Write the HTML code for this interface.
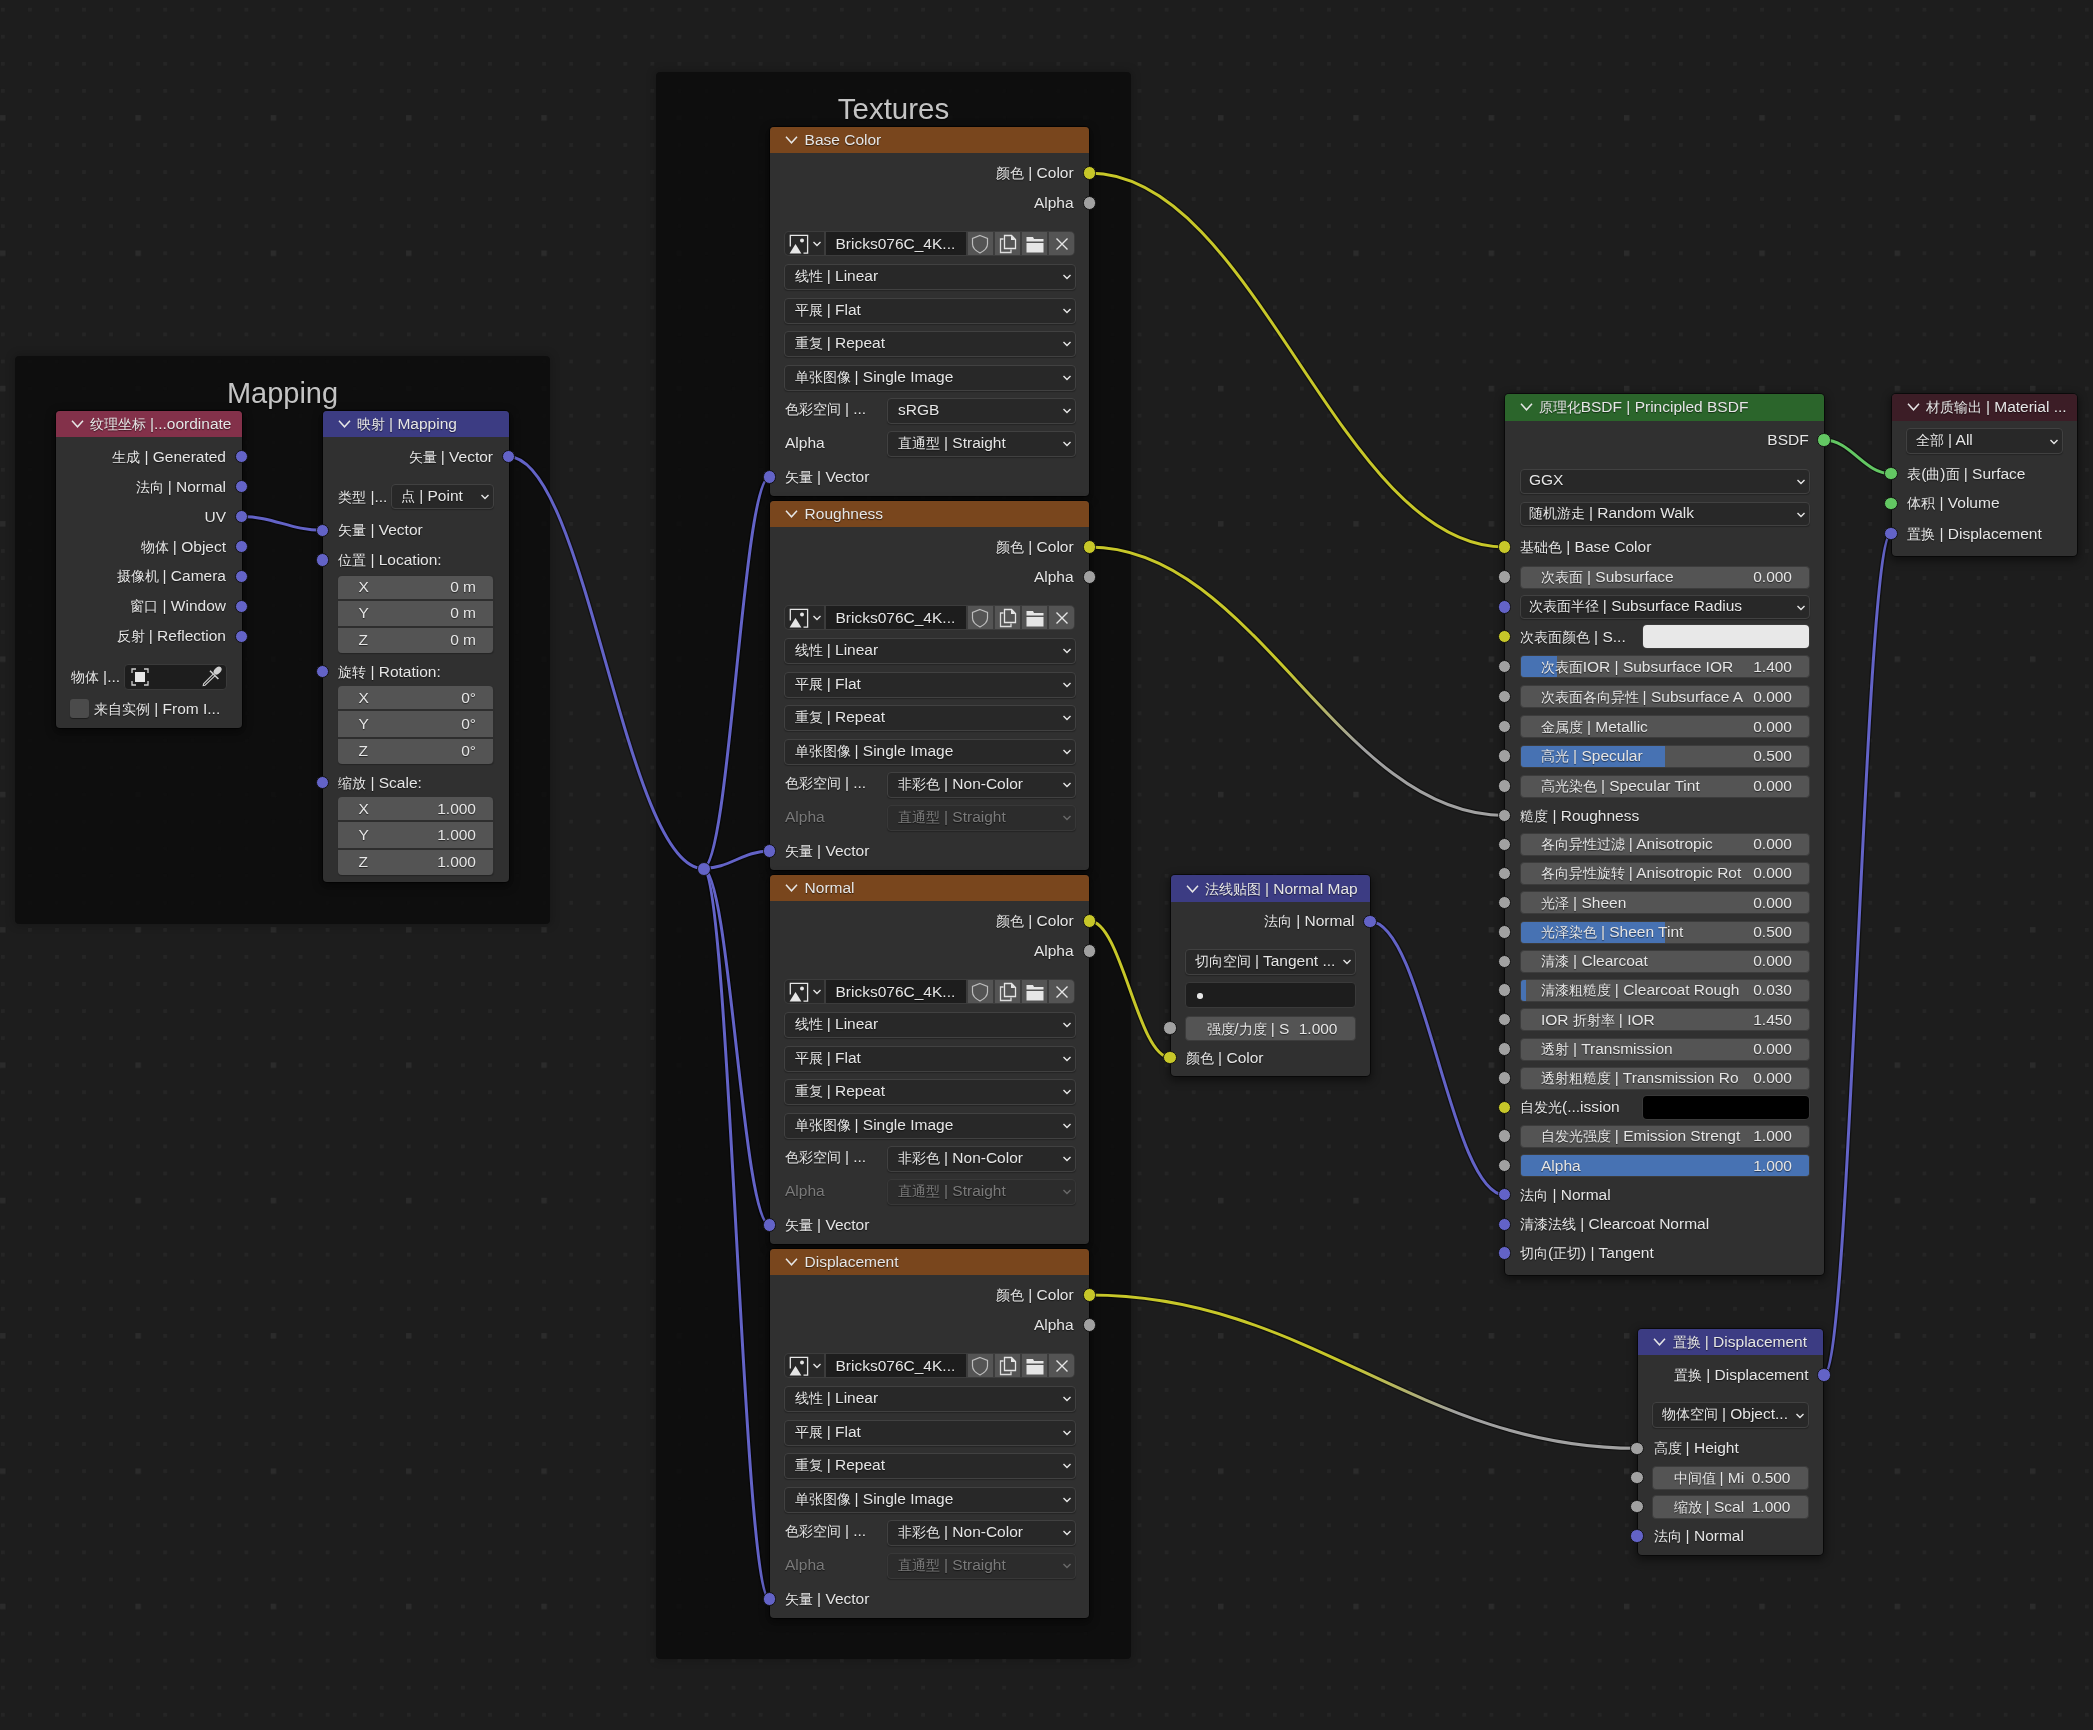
<!DOCTYPE html><html><head><meta charset="utf-8"><style>
html,body{margin:0;padding:0;width:2093px;height:1730px;overflow:hidden;background:#1d1d1d;font-family:"Liberation Sans",sans-serif}
.r,.t,.n,.f,svg{position:absolute}
.t{white-space:nowrap;line-height:20px;height:20px;text-shadow:0 1px 1px rgba(0,0,0,.55)}
.n{background:#303030;border-radius:4px;box-shadow:0 0 0 1px rgba(0,0,0,.55),0 3px 8px 2px rgba(0,0,0,.45)}
.f{background:rgba(12,12,12,.85);border-radius:4px;box-shadow:0 0 8px 2px rgba(0,0,0,.18)}
.c{font-size:0.89em;display:inline-block;white-space:nowrap}
.so{position:absolute;width:11.4px;height:11.4px;border-radius:50%;border:1.1px solid #121212}

</style></head><body><div id="w" style="position:absolute;left:0;top:0;width:2093px;height:1730px;will-change:transform">
<svg style="left:0;top:0" width="2093" height="1730"><defs><pattern id="g" x="0.8999999999999999" y="7.74" width="27.065" height="27.065" patternUnits="userSpaceOnUse"><rect x="0" y="0" width="3.8" height="3.8" fill="#252525"/></pattern><pattern id="G" x="0.04999999999999982" y="115.15" width="135.32500000000002" height="135.32500000000002" patternUnits="userSpaceOnUse"><rect x="0" y="0" width="5.5" height="5.5" fill="#2b2b2b"/></pattern></defs><rect width="2093" height="1730" fill="url(#g)"/><rect width="2093" height="1730" fill="url(#G)"/></svg>
<div class="f" style="left:15px;top:356px;width:535px;height:568px"></div>
<div class="t" style="left:-17.5px;width:600px;text-align:center;top:383.0px;color:#c4c4c4;font-size:29px;line-height:20px">Mapping</div>
<div class="f" style="left:656px;top:72px;width:475px;height:587px;height:1587px"></div>
<div class="t" style="left:593.5px;width:600px;text-align:center;top:99.0px;color:#c4c4c4;font-size:29.5px;">Textures</div>
<svg style="left:0;top:0" width="2093" height="1730"><defs>
<linearGradient id="lg7" gradientUnits="userSpaceOnUse" x1="1089.5" y1="547" x2="1504.5" y2="815.5"><stop offset="0.46" stop-color="#c7c729"/><stop offset="0.68" stop-color="#a1a1a1"/></linearGradient>
<linearGradient id="lg11" gradientUnits="userSpaceOnUse" x1="1089.5" y1="1295" x2="1637" y2="1448.3"><stop offset="0.46" stop-color="#c7c729"/><stop offset="0.68" stop-color="#a1a1a1"/></linearGradient>
</defs>
<path d="M241.5 516.5 C273.9 516.5 290.1 530.3 322.5 530.3" fill="none" stroke="rgba(0,0,0,.42)" stroke-width="5.6"/>
<path d="M508.5 456.7 C586.3 456.7 625.2 868.5 703.0 868.5" fill="none" stroke="rgba(0,0,0,.42)" stroke-width="5.6"/>
<path d="M703.0 868.5 C729.6 868.5 742.9 477.0 769.5 477.0" fill="none" stroke="rgba(0,0,0,.42)" stroke-width="5.6"/>
<path d="M703.0 868.5 C729.6 868.5 742.9 851.0 769.5 851.0" fill="none" stroke="rgba(0,0,0,.42)" stroke-width="5.6"/>
<path d="M703.0 868.5 C729.6 868.5 742.9 1225.0 769.5 1225.0" fill="none" stroke="rgba(0,0,0,.42)" stroke-width="5.6"/>
<path d="M703.0 868.5 C729.6 868.5 742.9 1599.0 769.5 1599.0" fill="none" stroke="rgba(0,0,0,.42)" stroke-width="5.6"/>
<path d="M1089.5 173.0 C1255.5 173.0 1338.5 547.0 1504.5 547.0" fill="none" stroke="rgba(0,0,0,.42)" stroke-width="5.6"/>
<path d="M1089.5 547.0 C1255.5 547.0 1338.5 815.5 1504.5 815.5" fill="none" stroke="rgba(0,0,0,.42)" stroke-width="5.6"/>
<path d="M1089.5 921.0 C1121.7 921.0 1137.8 1057.5 1170.0 1057.5" fill="none" stroke="rgba(0,0,0,.42)" stroke-width="5.6"/>
<path d="M1370.0 921.4 C1423.8 921.4 1450.7 1194.8 1504.5 1194.8" fill="none" stroke="rgba(0,0,0,.42)" stroke-width="5.6"/>
<path d="M1824.0 440.0 C1850.8 440.0 1864.2 473.7 1891.0 473.7" fill="none" stroke="rgba(0,0,0,.42)" stroke-width="5.6"/>
<path d="M1089.5 1295.0 C1308.5 1295.0 1418.0 1448.3 1637.0 1448.3" fill="none" stroke="rgba(0,0,0,.42)" stroke-width="5.6"/>
<path d="M1824.0 1375.0 C1850.8 1375.0 1864.2 533.5 1891.0 533.5" fill="none" stroke="rgba(0,0,0,.42)" stroke-width="5.6"/>
<path d="M241.5 516.5 C273.9 516.5 290.1 530.3 322.5 530.3" fill="none" stroke="#6363c7" stroke-width="3.0"/>
<path d="M508.5 456.7 C586.3 456.7 625.2 868.5 703.0 868.5" fill="none" stroke="#6363c7" stroke-width="3.0"/>
<path d="M703.0 868.5 C729.6 868.5 742.9 477.0 769.5 477.0" fill="none" stroke="#6363c7" stroke-width="3.0"/>
<path d="M703.0 868.5 C729.6 868.5 742.9 851.0 769.5 851.0" fill="none" stroke="#6363c7" stroke-width="3.0"/>
<path d="M703.0 868.5 C729.6 868.5 742.9 1225.0 769.5 1225.0" fill="none" stroke="#6363c7" stroke-width="3.0"/>
<path d="M703.0 868.5 C729.6 868.5 742.9 1599.0 769.5 1599.0" fill="none" stroke="#6363c7" stroke-width="3.0"/>
<path d="M1089.5 173.0 C1255.5 173.0 1338.5 547.0 1504.5 547.0" fill="none" stroke="#c7c729" stroke-width="3.0"/>
<path d="M1089.5 547.0 C1255.5 547.0 1338.5 815.5 1504.5 815.5" fill="none" stroke="url(#lg7)" stroke-width="3.0"/>
<path d="M1089.5 921.0 C1121.7 921.0 1137.8 1057.5 1170.0 1057.5" fill="none" stroke="#c7c729" stroke-width="3.0"/>
<path d="M1370.0 921.4 C1423.8 921.4 1450.7 1194.8 1504.5 1194.8" fill="none" stroke="#6363c7" stroke-width="3.0"/>
<path d="M1824.0 440.0 C1850.8 440.0 1864.2 473.7 1891.0 473.7" fill="none" stroke="#63c763" stroke-width="3.0"/>
<path d="M1089.5 1295.0 C1308.5 1295.0 1418.0 1448.3 1637.0 1448.3" fill="none" stroke="url(#lg11)" stroke-width="3.0"/>
<path d="M1824.0 1375.0 C1850.8 1375.0 1864.2 533.5 1891.0 533.5" fill="none" stroke="#6363c7" stroke-width="3.0"/>
</svg>
<div class="n" style="left:56.0px;top:410.5px;width:185.5px;height:317.5px"></div>
<div class="r" style="left:56.0px;top:410.5px;width:185.5px;height:26.5px;background:#83314a;border-radius:4px 4px 0 0"></div>
<svg class="r" style="left:70.5px;top:418.8px" width="14" height="10"><path d="M1 1.8 L6.5 7.8 L12 1.8" fill="none" stroke="#e6e6e6" stroke-width="1.5"/></svg>
<div class="t" style="left:90.0px;top:413.8px;color:#e6e6e6;font-size:15.5px;"><span class="c" style="width:55.6px">纹理坐标</span> |...oordinate</div>
<div class="t" style="right:1867.0px;top:446.5px;color:#e6e6e6;font-size:15.5px;"><span class="c" style="width:27.8px">生成</span> | Generated</div>
<div class="t" style="right:1867.0px;top:476.5px;color:#e6e6e6;font-size:15.5px;"><span class="c" style="width:27.8px">法向</span> | Normal</div>
<div class="t" style="right:1867.0px;top:506.5px;color:#e6e6e6;font-size:15.5px;">UV</div>
<div class="t" style="right:1867.0px;top:536.5px;color:#e6e6e6;font-size:15.5px;"><span class="c" style="width:27.8px">物体</span> | Object</div>
<div class="t" style="right:1867.0px;top:566.4px;color:#e6e6e6;font-size:15.5px;"><span class="c" style="width:41.7px">摄像机</span> | Camera</div>
<div class="t" style="right:1867.0px;top:596.3px;color:#e6e6e6;font-size:15.5px;"><span class="c" style="width:27.8px">窗口</span> | Window</div>
<div class="t" style="right:1867.0px;top:626.3px;color:#e6e6e6;font-size:15.5px;"><span class="c" style="width:27.8px">反射</span> | Reflection</div>
<div class="t" style="left:71.0px;top:667.0px;color:#e6e6e6;font-size:15.5px;"><span class="c" style="width:27.8px">物体</span> |...</div>
<div class="r" style="left:124px;top:664px;width:101px;height:24px;background:#1d1d1d;border:1px solid #3a3a3a;border-radius:4px"></div>
<svg class="r" style="left:130px;top:667px" width="20" height="20"><path d="M2 6V2H6M14 2H18V6M18 14V18H14M6 18H2V14" fill="none" stroke="#cfcfcf" stroke-width="1.3"/><rect x="5" y="5" width="10" height="10" fill="#e6e6e6"/></svg>
<svg class="r" style="left:200px;top:664px" width="24" height="26"><ellipse cx="17.6" cy="6.6" rx="3.1" ry="4.6" transform="rotate(45 17.6 6.6)" fill="#cfcfcf"/><path d="M10 6.8 L18.4 15" stroke="#cfcfcf" stroke-width="1.6"/><path d="M13.2 10.2 L3.6 19.8 L3.2 21.6 L5 21.2 L14.8 11.8" fill="none" stroke="#cfcfcf" stroke-width="1.1"/></svg>
<div class="r" style="left:70px;top:699px;width:19px;height:19px;background:#4b4b4b;border-radius:3px;box-shadow:0 1px 1px rgba(0,0,0,.4)"></div>
<div class="t" style="left:94.3px;top:699.0px;color:#e6e6e6;font-size:15.5px;"><span class="c" style="width:55.6px">来自实例</span> | From I...</div>
<div class="n" style="left:323.0px;top:411.0px;width:185.5px;height:471.0px"></div>
<div class="r" style="left:323.0px;top:411.0px;width:185.5px;height:26.0px;background:#3c3c83;border-radius:4px 4px 0 0"></div>
<svg class="r" style="left:337.5px;top:419.0px" width="14" height="10"><path d="M1 1.8 L6.5 7.8 L12 1.8" fill="none" stroke="#e6e6e6" stroke-width="1.5"/></svg>
<div class="t" style="left:357.0px;top:414.0px;color:#e6e6e6;font-size:15.5px;"><span class="c" style="width:27.8px">映射</span> | Mapping</div>
<div class="t" style="right:1600.0px;top:446.7px;color:#e6e6e6;font-size:15.5px;"><span class="c" style="width:27.8px">矢量</span> | Vector</div>
<div class="t" style="left:338.3px;top:486.5px;color:#e6e6e6;font-size:15.5px;"><span class="c" style="width:27.8px">类型</span> |...</div>
<div class="r" style="left:391.0px;top:484.0px;width:101.0px;height:23.0px;background:#282828;border:1px solid #414141;border-radius:4px;box-shadow:0 1px 1px rgba(0,0,0,.25)"></div>
<div class="t" style="left:401.0px;top:485.7px;color:#e6e6e6;font-size:15.5px;"><span class="c" style="width:13.9px">点</span> | Point</div>
<svg class="r" style="left:480.0px;top:493.0px" width="10" height="8"><path d="M1.5 2 L5 5.5 L8.5 2" fill="none" stroke="#e6e6e6" stroke-width="1.4"/></svg>
<div class="t" style="left:338.3px;top:520.3px;color:#e6e6e6;font-size:15.5px;"><span class="c" style="width:27.8px">矢量</span> | Vector</div>
<div class="t" style="left:338.3px;top:550.1px;color:#e6e6e6;font-size:15.5px;"><span class="c" style="width:27.8px">位置</span> | Location:</div>
<div class="r" style="left:337.5px;top:575.4px;width:156px;height:78px;background:#2e2e2e;border-radius:4px;box-shadow:0 1px 1px rgba(0,0,0,.25)"></div>
<div class="r" style="left:338px;top:575.9px;width:155px;height:23.2px;background:#545454;border-radius:4px 4px 0 0"></div>
<div class="t" style="left:358.5px;top:577.1px;color:#e6e6e6;font-size:15.5px;">X</div>
<div class="t" style="right:1617.0px;top:577.1px;color:#e6e6e6;font-size:15.5px;">0 m</div>
<div class="r" style="left:338px;top:600.9px;width:155px;height:25.4px;background:#545454;border-radius:0"></div>
<div class="t" style="left:358.5px;top:603.2px;color:#e6e6e6;font-size:15.5px;">Y</div>
<div class="t" style="right:1617.0px;top:603.2px;color:#e6e6e6;font-size:15.5px;">0 m</div>
<div class="r" style="left:338px;top:628.1px;width:155px;height:25.0px;background:#545454;border-radius:0 0 4px 4px"></div>
<div class="t" style="left:358.5px;top:630.2px;color:#e6e6e6;font-size:15.5px;">Z</div>
<div class="t" style="right:1617.0px;top:630.2px;color:#e6e6e6;font-size:15.5px;">0 m</div>
<div class="t" style="left:338.3px;top:661.5px;color:#e6e6e6;font-size:15.5px;"><span class="c" style="width:27.8px">旋转</span> | Rotation:</div>
<div class="r" style="left:337.5px;top:685.8px;width:156px;height:78px;background:#2e2e2e;border-radius:4px;box-shadow:0 1px 1px rgba(0,0,0,.25)"></div>
<div class="r" style="left:338px;top:686.3px;width:155px;height:23.2px;background:#545454;border-radius:4px 4px 0 0"></div>
<div class="t" style="left:358.5px;top:687.5px;color:#e6e6e6;font-size:15.5px;">X</div>
<div class="t" style="right:1617.0px;top:687.5px;color:#e6e6e6;font-size:15.5px;">0°</div>
<div class="r" style="left:338px;top:711.3px;width:155px;height:25.4px;background:#545454;border-radius:0"></div>
<div class="t" style="left:358.5px;top:713.6px;color:#e6e6e6;font-size:15.5px;">Y</div>
<div class="t" style="right:1617.0px;top:713.6px;color:#e6e6e6;font-size:15.5px;">0°</div>
<div class="r" style="left:338px;top:738.5px;width:155px;height:25.0px;background:#545454;border-radius:0 0 4px 4px"></div>
<div class="t" style="left:358.5px;top:740.6px;color:#e6e6e6;font-size:15.5px;">Z</div>
<div class="t" style="right:1617.0px;top:740.6px;color:#e6e6e6;font-size:15.5px;">0°</div>
<div class="t" style="left:338.3px;top:772.5px;color:#e6e6e6;font-size:15.5px;"><span class="c" style="width:27.8px">缩放</span> | Scale:</div>
<div class="r" style="left:337.5px;top:796.8px;width:156px;height:78px;background:#2e2e2e;border-radius:4px;box-shadow:0 1px 1px rgba(0,0,0,.25)"></div>
<div class="r" style="left:338px;top:797.3px;width:155px;height:23.2px;background:#545454;border-radius:4px 4px 0 0"></div>
<div class="t" style="left:358.5px;top:798.5px;color:#e6e6e6;font-size:15.5px;">X</div>
<div class="t" style="right:1617.0px;top:798.5px;color:#e6e6e6;font-size:15.5px;">1.000</div>
<div class="r" style="left:338px;top:822.3px;width:155px;height:25.4px;background:#545454;border-radius:0"></div>
<div class="t" style="left:358.5px;top:824.6px;color:#e6e6e6;font-size:15.5px;">Y</div>
<div class="t" style="right:1617.0px;top:824.6px;color:#e6e6e6;font-size:15.5px;">1.000</div>
<div class="r" style="left:338px;top:849.5px;width:155px;height:25.0px;background:#545454;border-radius:0 0 4px 4px"></div>
<div class="t" style="left:358.5px;top:851.6px;color:#e6e6e6;font-size:15.5px;">Z</div>
<div class="t" style="right:1617.0px;top:851.6px;color:#e6e6e6;font-size:15.5px;">1.000</div>
<div class="n" style="left:770.0px;top:127.0px;width:319.0px;height:369.0px"></div>
<div class="r" style="left:770.0px;top:127.0px;width:319.0px;height:26.0px;background:#79461d;border-radius:4px 4px 0 0"></div>
<svg class="r" style="left:784.5px;top:135.0px" width="14" height="10"><path d="M1 1.8 L6.5 7.8 L12 1.8" fill="none" stroke="#e6e6e6" stroke-width="1.5"/></svg>
<div class="t" style="left:804.6px;top:130.0px;color:#e6e6e6;font-size:15.5px;">Base Color</div>
<div class="t" style="right:1019.4px;top:163.0px;color:#e6e6e6;font-size:15.5px;"><span class="c" style="width:27.8px">颜色</span> | Color</div>
<div class="t" style="right:1019.4px;top:193.0px;color:#e6e6e6;font-size:15.5px;">Alpha</div>
<div class="r" style="left:784px;top:231px;width:291px;height:25px;background:#3c3c3c;border-radius:5px"></div>
<div class="r" style="left:785px;top:232px;width:39px;height:23px;background:#282828;border-radius:4px 0 0 4px"></div>
<svg class="r" style="left:789px;top:233.5px" width="22" height="22"><path d="M1.3 12.5 V1.3 H18.6 V19.1 H14.5" fill="none" stroke="#e6e6e6" stroke-width="1.3"/><path d="M0.6 19.6 L6.5 10 L12.4 19.6 Z" fill="#e6e6e6"/><circle cx="13" cy="6.6" r="2" fill="#e6e6e6"/></svg>
<svg class="r" style="left:812.0px;top:240.0px" width="10" height="8"><path d="M1.5 2 L5 5.5 L8.5 2" fill="none" stroke="#e6e6e6" stroke-width="1.4"/></svg>
<div class="r" style="left:826px;top:232px;width:140px;height:23px;background:#1d1d1d"></div>
<div class="t" style="left:835.5px;top:233.5px;color:#e6e6e6;font-size:15.5px;">Bricks076C_4K...</div>
<div class="r" style="left:968px;top:232px;width:25px;height:23px;background:#545454;border-radius:0"></div>
<div class="r" style="left:995px;top:232px;width:25px;height:23px;background:#545454;border-radius:0"></div>
<div class="r" style="left:1022px;top:232px;width:25px;height:23px;background:#545454;border-radius:0"></div>
<div class="r" style="left:1049px;top:232px;width:25px;height:23px;background:#545454;border-radius:0 4px 4px 0"></div>
<svg class="r" style="left:970px;top:232.5px" width="20" height="22"><path d="M10 2.5 L17.5 5.5 V11 C17.5 15 14 18 10 20 C6 18 2.5 15 2.5 11 V5.5 Z" fill="none" stroke="#bdbdbd" stroke-width="1.2"/></svg>
<svg class="r" style="left:997px;top:232.5px" width="22" height="22"><path d="M6.5 6 H3.5 V19.5 H14 V16.5" fill="none" stroke="#dcdcdc" stroke-width="1.3"/><path d="M7.5 2.5 H14.5 L18.5 6.5 V15.5 H7.5 Z" fill="none" stroke="#e6e6e6" stroke-width="1.3"/><path d="M14 2.5 L18.5 7 H14 Z" fill="#e6e6e6"/></svg>
<svg class="r" style="left:1024px;top:232.5px" width="22" height="22"><path d="M2.5 4 H9 L10 6 H19.5 V8.5 H2.5 Z" fill="#e6e6e6"/><rect x="2.5" y="10" width="17" height="9.5" fill="#e6e6e6"/></svg>
<svg class="r" style="left:1051px;top:232.5px" width="22" height="22"><path d="M5.5 5.5 L16.5 16.5 M16.5 5.5 L5.5 16.5" stroke="#e6e6e6" stroke-width="1.4"/></svg>
<div class="r" style="left:784.0px;top:264.0px;width:289.5px;height:23.5px;background:#282828;border:1px solid #414141;border-radius:4px;box-shadow:0 1px 1px rgba(0,0,0,.25)"></div>
<div class="t" style="left:794.6px;top:265.9px;color:#e6e6e6;font-size:15.5px;"><span class="c" style="width:27.8px">线性</span> | Linear</div>
<svg class="r" style="left:1061.5px;top:273.2px" width="10" height="8"><path d="M1.5 2 L5 5.5 L8.5 2" fill="none" stroke="#e6e6e6" stroke-width="1.4"/></svg>
<div class="r" style="left:784.0px;top:298.0px;width:289.5px;height:23.5px;background:#282828;border:1px solid #414141;border-radius:4px;box-shadow:0 1px 1px rgba(0,0,0,.25)"></div>
<div class="t" style="left:794.6px;top:299.9px;color:#e6e6e6;font-size:15.5px;"><span class="c" style="width:27.8px">平展</span> | Flat</div>
<svg class="r" style="left:1061.5px;top:307.2px" width="10" height="8"><path d="M1.5 2 L5 5.5 L8.5 2" fill="none" stroke="#e6e6e6" stroke-width="1.4"/></svg>
<div class="r" style="left:784.0px;top:331.0px;width:289.5px;height:23.5px;background:#282828;border:1px solid #414141;border-radius:4px;box-shadow:0 1px 1px rgba(0,0,0,.25)"></div>
<div class="t" style="left:794.6px;top:332.9px;color:#e6e6e6;font-size:15.5px;"><span class="c" style="width:27.8px">重复</span> | Repeat</div>
<svg class="r" style="left:1061.5px;top:340.2px" width="10" height="8"><path d="M1.5 2 L5 5.5 L8.5 2" fill="none" stroke="#e6e6e6" stroke-width="1.4"/></svg>
<div class="r" style="left:784.0px;top:365.0px;width:289.5px;height:23.5px;background:#282828;border:1px solid #414141;border-radius:4px;box-shadow:0 1px 1px rgba(0,0,0,.25)"></div>
<div class="t" style="left:794.6px;top:366.9px;color:#e6e6e6;font-size:15.5px;"><span class="c" style="width:55.6px">单张图像</span> | Single Image</div>
<svg class="r" style="left:1061.5px;top:374.2px" width="10" height="8"><path d="M1.5 2 L5 5.5 L8.5 2" fill="none" stroke="#e6e6e6" stroke-width="1.4"/></svg>
<div class="t" style="left:785.0px;top:399.0px;color:#e6e6e6;font-size:15.5px;"><span class="c" style="width:55.6px">色彩空间</span> | ...</div>
<div class="r" style="left:887.0px;top:398.0px;width:186.5px;height:23.5px;background:#282828;border:1px solid #414141;border-radius:4px;box-shadow:0 1px 1px rgba(0,0,0,.25)"></div>
<div class="t" style="left:898.0px;top:399.9px;color:#e6e6e6;font-size:15.5px;">sRGB</div>
<svg class="r" style="left:1061.5px;top:407.2px" width="10" height="8"><path d="M1.5 2 L5 5.5 L8.5 2" fill="none" stroke="#e6e6e6" stroke-width="1.4"/></svg>
<div class="t" style="left:785.0px;top:432.5px;color:#e6e6e6;font-size:15.5px;">Alpha</div>
<div class="r" style="left:887.0px;top:431.0px;width:186.5px;height:23.5px;background:#282828;border:1px solid #414141;border-radius:4px;box-shadow:0 1px 1px rgba(0,0,0,.25)"></div>
<div class="t" style="left:898.0px;top:432.9px;color:#e6e6e6;font-size:15.5px;"><span class="c" style="width:41.7px">直通型</span> | Straight</div>
<svg class="r" style="left:1061.5px;top:440.2px" width="10" height="8"><path d="M1.5 2 L5 5.5 L8.5 2" fill="none" stroke="#e6e6e6" stroke-width="1.4"/></svg>
<div class="t" style="left:785.0px;top:467.0px;color:#e6e6e6;font-size:15.5px;"><span class="c" style="width:27.8px">矢量</span> | Vector</div>
<div class="n" style="left:770.0px;top:501.0px;width:319.0px;height:369.0px"></div>
<div class="r" style="left:770.0px;top:501.0px;width:319.0px;height:26.0px;background:#79461d;border-radius:4px 4px 0 0"></div>
<svg class="r" style="left:784.5px;top:509.0px" width="14" height="10"><path d="M1 1.8 L6.5 7.8 L12 1.8" fill="none" stroke="#e6e6e6" stroke-width="1.5"/></svg>
<div class="t" style="left:804.6px;top:504.0px;color:#e6e6e6;font-size:15.5px;">Roughness</div>
<div class="t" style="right:1019.4px;top:537.0px;color:#e6e6e6;font-size:15.5px;"><span class="c" style="width:27.8px">颜色</span> | Color</div>
<div class="t" style="right:1019.4px;top:567.0px;color:#e6e6e6;font-size:15.5px;">Alpha</div>
<div class="r" style="left:784px;top:605px;width:291px;height:25px;background:#3c3c3c;border-radius:5px"></div>
<div class="r" style="left:785px;top:606px;width:39px;height:23px;background:#282828;border-radius:4px 0 0 4px"></div>
<svg class="r" style="left:789px;top:607.5px" width="22" height="22"><path d="M1.3 12.5 V1.3 H18.6 V19.1 H14.5" fill="none" stroke="#e6e6e6" stroke-width="1.3"/><path d="M0.6 19.6 L6.5 10 L12.4 19.6 Z" fill="#e6e6e6"/><circle cx="13" cy="6.6" r="2" fill="#e6e6e6"/></svg>
<svg class="r" style="left:812.0px;top:614.0px" width="10" height="8"><path d="M1.5 2 L5 5.5 L8.5 2" fill="none" stroke="#e6e6e6" stroke-width="1.4"/></svg>
<div class="r" style="left:826px;top:606px;width:140px;height:23px;background:#1d1d1d"></div>
<div class="t" style="left:835.5px;top:607.5px;color:#e6e6e6;font-size:15.5px;">Bricks076C_4K...</div>
<div class="r" style="left:968px;top:606px;width:25px;height:23px;background:#545454;border-radius:0"></div>
<div class="r" style="left:995px;top:606px;width:25px;height:23px;background:#545454;border-radius:0"></div>
<div class="r" style="left:1022px;top:606px;width:25px;height:23px;background:#545454;border-radius:0"></div>
<div class="r" style="left:1049px;top:606px;width:25px;height:23px;background:#545454;border-radius:0 4px 4px 0"></div>
<svg class="r" style="left:970px;top:606.5px" width="20" height="22"><path d="M10 2.5 L17.5 5.5 V11 C17.5 15 14 18 10 20 C6 18 2.5 15 2.5 11 V5.5 Z" fill="none" stroke="#bdbdbd" stroke-width="1.2"/></svg>
<svg class="r" style="left:997px;top:606.5px" width="22" height="22"><path d="M6.5 6 H3.5 V19.5 H14 V16.5" fill="none" stroke="#dcdcdc" stroke-width="1.3"/><path d="M7.5 2.5 H14.5 L18.5 6.5 V15.5 H7.5 Z" fill="none" stroke="#e6e6e6" stroke-width="1.3"/><path d="M14 2.5 L18.5 7 H14 Z" fill="#e6e6e6"/></svg>
<svg class="r" style="left:1024px;top:606.5px" width="22" height="22"><path d="M2.5 4 H9 L10 6 H19.5 V8.5 H2.5 Z" fill="#e6e6e6"/><rect x="2.5" y="10" width="17" height="9.5" fill="#e6e6e6"/></svg>
<svg class="r" style="left:1051px;top:606.5px" width="22" height="22"><path d="M5.5 5.5 L16.5 16.5 M16.5 5.5 L5.5 16.5" stroke="#e6e6e6" stroke-width="1.4"/></svg>
<div class="r" style="left:784.0px;top:638.0px;width:289.5px;height:23.5px;background:#282828;border:1px solid #414141;border-radius:4px;box-shadow:0 1px 1px rgba(0,0,0,.25)"></div>
<div class="t" style="left:794.6px;top:640.0px;color:#e6e6e6;font-size:15.5px;"><span class="c" style="width:27.8px">线性</span> | Linear</div>
<svg class="r" style="left:1061.5px;top:647.2px" width="10" height="8"><path d="M1.5 2 L5 5.5 L8.5 2" fill="none" stroke="#e6e6e6" stroke-width="1.4"/></svg>
<div class="r" style="left:784.0px;top:672.0px;width:289.5px;height:23.5px;background:#282828;border:1px solid #414141;border-radius:4px;box-shadow:0 1px 1px rgba(0,0,0,.25)"></div>
<div class="t" style="left:794.6px;top:674.0px;color:#e6e6e6;font-size:15.5px;"><span class="c" style="width:27.8px">平展</span> | Flat</div>
<svg class="r" style="left:1061.5px;top:681.2px" width="10" height="8"><path d="M1.5 2 L5 5.5 L8.5 2" fill="none" stroke="#e6e6e6" stroke-width="1.4"/></svg>
<div class="r" style="left:784.0px;top:705.0px;width:289.5px;height:23.5px;background:#282828;border:1px solid #414141;border-radius:4px;box-shadow:0 1px 1px rgba(0,0,0,.25)"></div>
<div class="t" style="left:794.6px;top:707.0px;color:#e6e6e6;font-size:15.5px;"><span class="c" style="width:27.8px">重复</span> | Repeat</div>
<svg class="r" style="left:1061.5px;top:714.2px" width="10" height="8"><path d="M1.5 2 L5 5.5 L8.5 2" fill="none" stroke="#e6e6e6" stroke-width="1.4"/></svg>
<div class="r" style="left:784.0px;top:739.0px;width:289.5px;height:23.5px;background:#282828;border:1px solid #414141;border-radius:4px;box-shadow:0 1px 1px rgba(0,0,0,.25)"></div>
<div class="t" style="left:794.6px;top:741.0px;color:#e6e6e6;font-size:15.5px;"><span class="c" style="width:55.6px">单张图像</span> | Single Image</div>
<svg class="r" style="left:1061.5px;top:748.2px" width="10" height="8"><path d="M1.5 2 L5 5.5 L8.5 2" fill="none" stroke="#e6e6e6" stroke-width="1.4"/></svg>
<div class="t" style="left:785.0px;top:773.0px;color:#e6e6e6;font-size:15.5px;"><span class="c" style="width:55.6px">色彩空间</span> | ...</div>
<div class="r" style="left:887.0px;top:772.0px;width:186.5px;height:23.5px;background:#282828;border:1px solid #414141;border-radius:4px;box-shadow:0 1px 1px rgba(0,0,0,.25)"></div>
<div class="t" style="left:898.0px;top:774.0px;color:#e6e6e6;font-size:15.5px;"><span class="c" style="width:41.7px">非彩色</span> | Non-Color</div>
<svg class="r" style="left:1061.5px;top:781.2px" width="10" height="8"><path d="M1.5 2 L5 5.5 L8.5 2" fill="none" stroke="#e6e6e6" stroke-width="1.4"/></svg>
<div class="t" style="left:785.0px;top:806.5px;color:#7a7a7a;font-size:15.5px;">Alpha</div>
<div class="r" style="left:887.0px;top:805.0px;width:186.5px;height:23.5px;background:#2c2c2c;border:1px solid #383838;border-radius:4px;box-shadow:0 1px 1px rgba(0,0,0,.25)"></div>
<div class="t" style="left:898.0px;top:807.0px;color:#7a7a7a;font-size:15.5px;"><span class="c" style="width:41.7px">直通型</span> | Straight</div>
<svg class="r" style="left:1061.5px;top:814.2px" width="10" height="8"><path d="M1.5 2 L5 5.5 L8.5 2" fill="none" stroke="#6a6a6a" stroke-width="1.4"/></svg>
<div class="t" style="left:785.0px;top:841.0px;color:#e6e6e6;font-size:15.5px;"><span class="c" style="width:27.8px">矢量</span> | Vector</div>
<div class="n" style="left:770.0px;top:875.0px;width:319.0px;height:369.0px"></div>
<div class="r" style="left:770.0px;top:875.0px;width:319.0px;height:26.0px;background:#79461d;border-radius:4px 4px 0 0"></div>
<svg class="r" style="left:784.5px;top:883.0px" width="14" height="10"><path d="M1 1.8 L6.5 7.8 L12 1.8" fill="none" stroke="#e6e6e6" stroke-width="1.5"/></svg>
<div class="t" style="left:804.6px;top:878.0px;color:#e6e6e6;font-size:15.5px;">Normal</div>
<div class="t" style="right:1019.4px;top:911.0px;color:#e6e6e6;font-size:15.5px;"><span class="c" style="width:27.8px">颜色</span> | Color</div>
<div class="t" style="right:1019.4px;top:941.0px;color:#e6e6e6;font-size:15.5px;">Alpha</div>
<div class="r" style="left:784px;top:979px;width:291px;height:25px;background:#3c3c3c;border-radius:5px"></div>
<div class="r" style="left:785px;top:980px;width:39px;height:23px;background:#282828;border-radius:4px 0 0 4px"></div>
<svg class="r" style="left:789px;top:981.5px" width="22" height="22"><path d="M1.3 12.5 V1.3 H18.6 V19.1 H14.5" fill="none" stroke="#e6e6e6" stroke-width="1.3"/><path d="M0.6 19.6 L6.5 10 L12.4 19.6 Z" fill="#e6e6e6"/><circle cx="13" cy="6.6" r="2" fill="#e6e6e6"/></svg>
<svg class="r" style="left:812.0px;top:988.0px" width="10" height="8"><path d="M1.5 2 L5 5.5 L8.5 2" fill="none" stroke="#e6e6e6" stroke-width="1.4"/></svg>
<div class="r" style="left:826px;top:980px;width:140px;height:23px;background:#1d1d1d"></div>
<div class="t" style="left:835.5px;top:981.5px;color:#e6e6e6;font-size:15.5px;">Bricks076C_4K...</div>
<div class="r" style="left:968px;top:980px;width:25px;height:23px;background:#545454;border-radius:0"></div>
<div class="r" style="left:995px;top:980px;width:25px;height:23px;background:#545454;border-radius:0"></div>
<div class="r" style="left:1022px;top:980px;width:25px;height:23px;background:#545454;border-radius:0"></div>
<div class="r" style="left:1049px;top:980px;width:25px;height:23px;background:#545454;border-radius:0 4px 4px 0"></div>
<svg class="r" style="left:970px;top:980.5px" width="20" height="22"><path d="M10 2.5 L17.5 5.5 V11 C17.5 15 14 18 10 20 C6 18 2.5 15 2.5 11 V5.5 Z" fill="none" stroke="#bdbdbd" stroke-width="1.2"/></svg>
<svg class="r" style="left:997px;top:980.5px" width="22" height="22"><path d="M6.5 6 H3.5 V19.5 H14 V16.5" fill="none" stroke="#dcdcdc" stroke-width="1.3"/><path d="M7.5 2.5 H14.5 L18.5 6.5 V15.5 H7.5 Z" fill="none" stroke="#e6e6e6" stroke-width="1.3"/><path d="M14 2.5 L18.5 7 H14 Z" fill="#e6e6e6"/></svg>
<svg class="r" style="left:1024px;top:980.5px" width="22" height="22"><path d="M2.5 4 H9 L10 6 H19.5 V8.5 H2.5 Z" fill="#e6e6e6"/><rect x="2.5" y="10" width="17" height="9.5" fill="#e6e6e6"/></svg>
<svg class="r" style="left:1051px;top:980.5px" width="22" height="22"><path d="M5.5 5.5 L16.5 16.5 M16.5 5.5 L5.5 16.5" stroke="#e6e6e6" stroke-width="1.4"/></svg>
<div class="r" style="left:784.0px;top:1012.0px;width:289.5px;height:23.5px;background:#282828;border:1px solid #414141;border-radius:4px;box-shadow:0 1px 1px rgba(0,0,0,.25)"></div>
<div class="t" style="left:794.6px;top:1014.0px;color:#e6e6e6;font-size:15.5px;"><span class="c" style="width:27.8px">线性</span> | Linear</div>
<svg class="r" style="left:1061.5px;top:1021.2px" width="10" height="8"><path d="M1.5 2 L5 5.5 L8.5 2" fill="none" stroke="#e6e6e6" stroke-width="1.4"/></svg>
<div class="r" style="left:784.0px;top:1046.0px;width:289.5px;height:23.5px;background:#282828;border:1px solid #414141;border-radius:4px;box-shadow:0 1px 1px rgba(0,0,0,.25)"></div>
<div class="t" style="left:794.6px;top:1048.0px;color:#e6e6e6;font-size:15.5px;"><span class="c" style="width:27.8px">平展</span> | Flat</div>
<svg class="r" style="left:1061.5px;top:1055.2px" width="10" height="8"><path d="M1.5 2 L5 5.5 L8.5 2" fill="none" stroke="#e6e6e6" stroke-width="1.4"/></svg>
<div class="r" style="left:784.0px;top:1079.0px;width:289.5px;height:23.5px;background:#282828;border:1px solid #414141;border-radius:4px;box-shadow:0 1px 1px rgba(0,0,0,.25)"></div>
<div class="t" style="left:794.6px;top:1081.0px;color:#e6e6e6;font-size:15.5px;"><span class="c" style="width:27.8px">重复</span> | Repeat</div>
<svg class="r" style="left:1061.5px;top:1088.2px" width="10" height="8"><path d="M1.5 2 L5 5.5 L8.5 2" fill="none" stroke="#e6e6e6" stroke-width="1.4"/></svg>
<div class="r" style="left:784.0px;top:1113.0px;width:289.5px;height:23.5px;background:#282828;border:1px solid #414141;border-radius:4px;box-shadow:0 1px 1px rgba(0,0,0,.25)"></div>
<div class="t" style="left:794.6px;top:1115.0px;color:#e6e6e6;font-size:15.5px;"><span class="c" style="width:55.6px">单张图像</span> | Single Image</div>
<svg class="r" style="left:1061.5px;top:1122.2px" width="10" height="8"><path d="M1.5 2 L5 5.5 L8.5 2" fill="none" stroke="#e6e6e6" stroke-width="1.4"/></svg>
<div class="t" style="left:785.0px;top:1147.0px;color:#e6e6e6;font-size:15.5px;"><span class="c" style="width:55.6px">色彩空间</span> | ...</div>
<div class="r" style="left:887.0px;top:1146.0px;width:186.5px;height:23.5px;background:#282828;border:1px solid #414141;border-radius:4px;box-shadow:0 1px 1px rgba(0,0,0,.25)"></div>
<div class="t" style="left:898.0px;top:1148.0px;color:#e6e6e6;font-size:15.5px;"><span class="c" style="width:41.7px">非彩色</span> | Non-Color</div>
<svg class="r" style="left:1061.5px;top:1155.2px" width="10" height="8"><path d="M1.5 2 L5 5.5 L8.5 2" fill="none" stroke="#e6e6e6" stroke-width="1.4"/></svg>
<div class="t" style="left:785.0px;top:1180.5px;color:#7a7a7a;font-size:15.5px;">Alpha</div>
<div class="r" style="left:887.0px;top:1179.0px;width:186.5px;height:23.5px;background:#2c2c2c;border:1px solid #383838;border-radius:4px;box-shadow:0 1px 1px rgba(0,0,0,.25)"></div>
<div class="t" style="left:898.0px;top:1181.0px;color:#7a7a7a;font-size:15.5px;"><span class="c" style="width:41.7px">直通型</span> | Straight</div>
<svg class="r" style="left:1061.5px;top:1188.2px" width="10" height="8"><path d="M1.5 2 L5 5.5 L8.5 2" fill="none" stroke="#6a6a6a" stroke-width="1.4"/></svg>
<div class="t" style="left:785.0px;top:1215.0px;color:#e6e6e6;font-size:15.5px;"><span class="c" style="width:27.8px">矢量</span> | Vector</div>
<div class="n" style="left:770.0px;top:1249.0px;width:319.0px;height:369.0px"></div>
<div class="r" style="left:770.0px;top:1249.0px;width:319.0px;height:26.0px;background:#79461d;border-radius:4px 4px 0 0"></div>
<svg class="r" style="left:784.5px;top:1257.0px" width="14" height="10"><path d="M1 1.8 L6.5 7.8 L12 1.8" fill="none" stroke="#e6e6e6" stroke-width="1.5"/></svg>
<div class="t" style="left:804.6px;top:1252.0px;color:#e6e6e6;font-size:15.5px;">Displacement</div>
<div class="t" style="right:1019.4px;top:1285.0px;color:#e6e6e6;font-size:15.5px;"><span class="c" style="width:27.8px">颜色</span> | Color</div>
<div class="t" style="right:1019.4px;top:1315.0px;color:#e6e6e6;font-size:15.5px;">Alpha</div>
<div class="r" style="left:784px;top:1353px;width:291px;height:25px;background:#3c3c3c;border-radius:5px"></div>
<div class="r" style="left:785px;top:1354px;width:39px;height:23px;background:#282828;border-radius:4px 0 0 4px"></div>
<svg class="r" style="left:789px;top:1355.5px" width="22" height="22"><path d="M1.3 12.5 V1.3 H18.6 V19.1 H14.5" fill="none" stroke="#e6e6e6" stroke-width="1.3"/><path d="M0.6 19.6 L6.5 10 L12.4 19.6 Z" fill="#e6e6e6"/><circle cx="13" cy="6.6" r="2" fill="#e6e6e6"/></svg>
<svg class="r" style="left:812.0px;top:1362.0px" width="10" height="8"><path d="M1.5 2 L5 5.5 L8.5 2" fill="none" stroke="#e6e6e6" stroke-width="1.4"/></svg>
<div class="r" style="left:826px;top:1354px;width:140px;height:23px;background:#1d1d1d"></div>
<div class="t" style="left:835.5px;top:1355.5px;color:#e6e6e6;font-size:15.5px;">Bricks076C_4K...</div>
<div class="r" style="left:968px;top:1354px;width:25px;height:23px;background:#545454;border-radius:0"></div>
<div class="r" style="left:995px;top:1354px;width:25px;height:23px;background:#545454;border-radius:0"></div>
<div class="r" style="left:1022px;top:1354px;width:25px;height:23px;background:#545454;border-radius:0"></div>
<div class="r" style="left:1049px;top:1354px;width:25px;height:23px;background:#545454;border-radius:0 4px 4px 0"></div>
<svg class="r" style="left:970px;top:1354.5px" width="20" height="22"><path d="M10 2.5 L17.5 5.5 V11 C17.5 15 14 18 10 20 C6 18 2.5 15 2.5 11 V5.5 Z" fill="none" stroke="#bdbdbd" stroke-width="1.2"/></svg>
<svg class="r" style="left:997px;top:1354.5px" width="22" height="22"><path d="M6.5 6 H3.5 V19.5 H14 V16.5" fill="none" stroke="#dcdcdc" stroke-width="1.3"/><path d="M7.5 2.5 H14.5 L18.5 6.5 V15.5 H7.5 Z" fill="none" stroke="#e6e6e6" stroke-width="1.3"/><path d="M14 2.5 L18.5 7 H14 Z" fill="#e6e6e6"/></svg>
<svg class="r" style="left:1024px;top:1354.5px" width="22" height="22"><path d="M2.5 4 H9 L10 6 H19.5 V8.5 H2.5 Z" fill="#e6e6e6"/><rect x="2.5" y="10" width="17" height="9.5" fill="#e6e6e6"/></svg>
<svg class="r" style="left:1051px;top:1354.5px" width="22" height="22"><path d="M5.5 5.5 L16.5 16.5 M16.5 5.5 L5.5 16.5" stroke="#e6e6e6" stroke-width="1.4"/></svg>
<div class="r" style="left:784.0px;top:1386.0px;width:289.5px;height:23.5px;background:#282828;border:1px solid #414141;border-radius:4px;box-shadow:0 1px 1px rgba(0,0,0,.25)"></div>
<div class="t" style="left:794.6px;top:1388.0px;color:#e6e6e6;font-size:15.5px;"><span class="c" style="width:27.8px">线性</span> | Linear</div>
<svg class="r" style="left:1061.5px;top:1395.2px" width="10" height="8"><path d="M1.5 2 L5 5.5 L8.5 2" fill="none" stroke="#e6e6e6" stroke-width="1.4"/></svg>
<div class="r" style="left:784.0px;top:1420.0px;width:289.5px;height:23.5px;background:#282828;border:1px solid #414141;border-radius:4px;box-shadow:0 1px 1px rgba(0,0,0,.25)"></div>
<div class="t" style="left:794.6px;top:1422.0px;color:#e6e6e6;font-size:15.5px;"><span class="c" style="width:27.8px">平展</span> | Flat</div>
<svg class="r" style="left:1061.5px;top:1429.2px" width="10" height="8"><path d="M1.5 2 L5 5.5 L8.5 2" fill="none" stroke="#e6e6e6" stroke-width="1.4"/></svg>
<div class="r" style="left:784.0px;top:1453.0px;width:289.5px;height:23.5px;background:#282828;border:1px solid #414141;border-radius:4px;box-shadow:0 1px 1px rgba(0,0,0,.25)"></div>
<div class="t" style="left:794.6px;top:1455.0px;color:#e6e6e6;font-size:15.5px;"><span class="c" style="width:27.8px">重复</span> | Repeat</div>
<svg class="r" style="left:1061.5px;top:1462.2px" width="10" height="8"><path d="M1.5 2 L5 5.5 L8.5 2" fill="none" stroke="#e6e6e6" stroke-width="1.4"/></svg>
<div class="r" style="left:784.0px;top:1487.0px;width:289.5px;height:23.5px;background:#282828;border:1px solid #414141;border-radius:4px;box-shadow:0 1px 1px rgba(0,0,0,.25)"></div>
<div class="t" style="left:794.6px;top:1489.0px;color:#e6e6e6;font-size:15.5px;"><span class="c" style="width:55.6px">单张图像</span> | Single Image</div>
<svg class="r" style="left:1061.5px;top:1496.2px" width="10" height="8"><path d="M1.5 2 L5 5.5 L8.5 2" fill="none" stroke="#e6e6e6" stroke-width="1.4"/></svg>
<div class="t" style="left:785.0px;top:1521.0px;color:#e6e6e6;font-size:15.5px;"><span class="c" style="width:55.6px">色彩空间</span> | ...</div>
<div class="r" style="left:887.0px;top:1520.0px;width:186.5px;height:23.5px;background:#282828;border:1px solid #414141;border-radius:4px;box-shadow:0 1px 1px rgba(0,0,0,.25)"></div>
<div class="t" style="left:898.0px;top:1522.0px;color:#e6e6e6;font-size:15.5px;"><span class="c" style="width:41.7px">非彩色</span> | Non-Color</div>
<svg class="r" style="left:1061.5px;top:1529.2px" width="10" height="8"><path d="M1.5 2 L5 5.5 L8.5 2" fill="none" stroke="#e6e6e6" stroke-width="1.4"/></svg>
<div class="t" style="left:785.0px;top:1554.5px;color:#7a7a7a;font-size:15.5px;">Alpha</div>
<div class="r" style="left:887.0px;top:1553.0px;width:186.5px;height:23.5px;background:#2c2c2c;border:1px solid #383838;border-radius:4px;box-shadow:0 1px 1px rgba(0,0,0,.25)"></div>
<div class="t" style="left:898.0px;top:1555.0px;color:#7a7a7a;font-size:15.5px;"><span class="c" style="width:41.7px">直通型</span> | Straight</div>
<svg class="r" style="left:1061.5px;top:1562.2px" width="10" height="8"><path d="M1.5 2 L5 5.5 L8.5 2" fill="none" stroke="#6a6a6a" stroke-width="1.4"/></svg>
<div class="t" style="left:785.0px;top:1589.0px;color:#e6e6e6;font-size:15.5px;"><span class="c" style="width:27.8px">矢量</span> | Vector</div>
<div class="n" style="left:1171.0px;top:875.0px;width:199.0px;height:201.0px"></div>
<div class="r" style="left:1171.0px;top:875.0px;width:199.0px;height:27.0px;background:#3c3c83;border-radius:4px 4px 0 0"></div>
<svg class="r" style="left:1185.5px;top:883.5px" width="14" height="10"><path d="M1 1.8 L6.5 7.8 L12 1.8" fill="none" stroke="#e6e6e6" stroke-width="1.5"/></svg>
<div class="t" style="left:1205.0px;top:878.5px;color:#e6e6e6;font-size:15.5px;"><span class="c" style="width:55.6px">法线贴图</span> | Normal Map</div>
<div class="t" style="right:738.5px;top:911.4px;color:#e6e6e6;font-size:15.5px;"><span class="c" style="width:27.8px">法向</span> | Normal</div>
<div class="r" style="left:1185.0px;top:949.0px;width:168.5px;height:23.5px;background:#282828;border:1px solid #414141;border-radius:4px;box-shadow:0 1px 1px rgba(0,0,0,.25)"></div>
<div class="t" style="left:1195.0px;top:951.0px;color:#e6e6e6;font-size:15.5px;"><span class="c" style="width:55.6px">切向空间</span> | Tangent ...</div>
<svg class="r" style="left:1341.5px;top:958.2px" width="10" height="8"><path d="M1.5 2 L5 5.5 L8.5 2" fill="none" stroke="#e6e6e6" stroke-width="1.4"/></svg>
<div class="r" style="left:1185px;top:982px;width:168.5px;height:23.5px;background:#1d1d1d;border:1px solid #3a3a3a;border-radius:4px"></div>
<div class="r" style="left:1197px;top:993px;width:5.5px;height:5.5px;background:#e6e6e6;border-radius:50%"></div>
<div class="r" style="left:1185.0px;top:1016.0px;width:168.5px;height:23.0px;background:#545454;border:1px solid #3c3c3c;border-radius:4px;overflow:hidden"></div>
<div class="t" style="left:1206.5px;top:1018.5px;color:#e6e6e6;font-size:15.5px;"><span class="c" style="width:27.8px">强度</span>/<span class="c" style="width:27.8px">力度</span> | S</div>
<div class="t" style="right:755.5px;top:1018.5px;color:#e6e6e6;font-size:15.5px;">1.000</div>
<div class="t" style="left:1186.0px;top:1047.5px;color:#e6e6e6;font-size:15.5px;"><span class="c" style="width:27.8px">颜色</span> | Color</div>
<div class="n" style="left:1505.0px;top:394.0px;width:319.0px;height:881.0px"></div>
<div class="r" style="left:1505.0px;top:394.0px;width:319.0px;height:26.5px;background:#2b652b;border-radius:4px 4px 0 0"></div>
<svg class="r" style="left:1519.5px;top:402.2px" width="14" height="10"><path d="M1 1.8 L6.5 7.8 L12 1.8" fill="none" stroke="#e6e6e6" stroke-width="1.5"/></svg>
<div class="t" style="left:1539.0px;top:397.2px;color:#e6e6e6;font-size:15.5px;"><span class="c" style="width:41.7px">原理化</span>BSDF | Principled BSDF</div>
<div class="t" style="right:284.3px;top:430.0px;color:#e6e6e6;font-size:15.5px;">BSDF</div>
<div class="r" style="left:1519.5px;top:469.0px;width:288.0px;height:22.5px;background:#282828;border:1px solid #414141;border-radius:4px;box-shadow:0 1px 1px rgba(0,0,0,.25)"></div>
<div class="t" style="left:1529.0px;top:470.4px;color:#e6e6e6;font-size:15.5px;">GGX</div>
<svg class="r" style="left:1795.5px;top:477.8px" width="10" height="8"><path d="M1.5 2 L5 5.5 L8.5 2" fill="none" stroke="#e6e6e6" stroke-width="1.4"/></svg>
<div class="r" style="left:1519.5px;top:502.0px;width:288.0px;height:22.0px;background:#282828;border:1px solid #414141;border-radius:4px;box-shadow:0 1px 1px rgba(0,0,0,.25)"></div>
<div class="t" style="left:1529.0px;top:503.2px;color:#e6e6e6;font-size:15.5px;"><span class="c" style="width:55.6px">随机游走</span> | Random Walk</div>
<svg class="r" style="left:1795.5px;top:510.5px" width="10" height="8"><path d="M1.5 2 L5 5.5 L8.5 2" fill="none" stroke="#e6e6e6" stroke-width="1.4"/></svg>
<div class="t" style="left:1520.3px;top:537.0px;color:#e6e6e6;font-size:15.5px;"><span class="c" style="width:41.7px">基础色</span> | Base Color</div>
<div class="r" style="left:1519.5px;top:565.5px;width:288.0px;height:21.0px;background:#545454;border:1px solid #3c3c3c;border-radius:4px;overflow:hidden"></div>
<div class="t" style="left:1541.0px;top:567.0px;color:#e6e6e6;font-size:15.5px;"><span class="c" style="width:41.7px">次表面</span> | Subsurface</div>
<div class="t" style="right:301.0px;top:567.0px;color:#e6e6e6;font-size:15.5px;">0.000</div>
<div class="r" style="left:1519.5px;top:595.0px;width:288.0px;height:22.0px;background:#282828;border:1px solid #414141;border-radius:4px;box-shadow:0 1px 1px rgba(0,0,0,.25)"></div>
<div class="t" style="left:1529.0px;top:596.2px;color:#e6e6e6;font-size:15.5px;"><span class="c" style="width:69.5px">次表面半径</span> | Subsurface Radius</div>
<svg class="r" style="left:1795.5px;top:603.5px" width="10" height="8"><path d="M1.5 2 L5 5.5 L8.5 2" fill="none" stroke="#e6e6e6" stroke-width="1.4"/></svg>
<div class="t" style="left:1520.3px;top:626.5px;color:#e6e6e6;font-size:15.5px;"><span class="c" style="width:69.5px">次表面颜色</span> | S...</div>
<div class="r" style="left:1643px;top:625.0px;width:166px;height:23px;background:#e8e8e8;border-radius:4px;box-shadow:0 0 0 1px #3a3a3a"></div>
<div class="r" style="left:1519.5px;top:655.0px;width:288.0px;height:21.0px;background:#545454;border:1px solid #3c3c3c;border-radius:4px;overflow:hidden"><div style="position:absolute;left:0;top:0;bottom:0;width:36.0px;background:#4772b3"></div></div>
<div class="t" style="left:1541.0px;top:656.5px;color:#e6e6e6;font-size:15.5px;"><span class="c" style="width:41.7px">次表面</span>IOR | Subsurface IOR</div>
<div class="t" style="right:301.0px;top:656.5px;color:#e6e6e6;font-size:15.5px;">1.400</div>
<div class="r" style="left:1519.5px;top:685.0px;width:288.0px;height:21.0px;background:#545454;border:1px solid #3c3c3c;border-radius:4px;overflow:hidden"></div>
<div class="t" style="left:1541.0px;top:686.5px;color:#e6e6e6;font-size:15.5px;"><span class="c" style="width:97.3px">次表面各向异性</span> | Subsurface A</div>
<div class="t" style="right:301.0px;top:686.5px;color:#e6e6e6;font-size:15.5px;">0.000</div>
<div class="r" style="left:1519.5px;top:715.2px;width:288.0px;height:21.0px;background:#545454;border:1px solid #3c3c3c;border-radius:4px;overflow:hidden"></div>
<div class="t" style="left:1541.0px;top:716.7px;color:#e6e6e6;font-size:15.5px;"><span class="c" style="width:41.7px">金属度</span> | Metallic</div>
<div class="t" style="right:301.0px;top:716.7px;color:#e6e6e6;font-size:15.5px;">0.000</div>
<div class="r" style="left:1519.5px;top:744.5px;width:288.0px;height:21.0px;background:#545454;border:1px solid #3c3c3c;border-radius:4px;overflow:hidden"><div style="position:absolute;left:0;top:0;bottom:0;width:144.0px;background:#4772b3"></div></div>
<div class="t" style="left:1541.0px;top:746.0px;color:#e6e6e6;font-size:15.5px;"><span class="c" style="width:27.8px">高光</span> | Specular</div>
<div class="t" style="right:301.0px;top:746.0px;color:#e6e6e6;font-size:15.5px;">0.500</div>
<div class="r" style="left:1519.5px;top:774.7px;width:288.0px;height:21.0px;background:#545454;border:1px solid #3c3c3c;border-radius:4px;overflow:hidden"></div>
<div class="t" style="left:1541.0px;top:776.2px;color:#e6e6e6;font-size:15.5px;"><span class="c" style="width:55.6px">高光染色</span> | Specular Tint</div>
<div class="t" style="right:301.0px;top:776.2px;color:#e6e6e6;font-size:15.5px;">0.000</div>
<div class="t" style="left:1520.3px;top:805.5px;color:#e6e6e6;font-size:15.5px;"><span class="c" style="width:27.8px">糙度</span> | Roughness</div>
<div class="r" style="left:1519.5px;top:832.9px;width:288.0px;height:21.0px;background:#545454;border:1px solid #3c3c3c;border-radius:4px;overflow:hidden"></div>
<div class="t" style="left:1541.0px;top:834.4px;color:#e6e6e6;font-size:15.5px;"><span class="c" style="width:83.4px">各向异性过滤</span> | Anisotropic</div>
<div class="t" style="right:301.0px;top:834.4px;color:#e6e6e6;font-size:15.5px;">0.000</div>
<div class="r" style="left:1519.5px;top:861.9px;width:288.0px;height:21.0px;background:#545454;border:1px solid #3c3c3c;border-radius:4px;overflow:hidden"></div>
<div class="t" style="left:1541.0px;top:863.4px;color:#e6e6e6;font-size:15.5px;"><span class="c" style="width:83.4px">各向异性旋转</span> | Anisotropic Rot</div>
<div class="t" style="right:301.0px;top:863.4px;color:#e6e6e6;font-size:15.5px;">0.000</div>
<div class="r" style="left:1519.5px;top:891.2px;width:288.0px;height:21.0px;background:#545454;border:1px solid #3c3c3c;border-radius:4px;overflow:hidden"></div>
<div class="t" style="left:1541.0px;top:892.7px;color:#e6e6e6;font-size:15.5px;"><span class="c" style="width:27.8px">光泽</span> | Sheen</div>
<div class="t" style="right:301.0px;top:892.7px;color:#e6e6e6;font-size:15.5px;">0.000</div>
<div class="r" style="left:1519.5px;top:920.5px;width:288.0px;height:21.0px;background:#545454;border:1px solid #3c3c3c;border-radius:4px;overflow:hidden"><div style="position:absolute;left:0;top:0;bottom:0;width:144.0px;background:#4772b3"></div></div>
<div class="t" style="left:1541.0px;top:922.0px;color:#e6e6e6;font-size:15.5px;"><span class="c" style="width:55.6px">光泽染色</span> | Sheen Tint</div>
<div class="t" style="right:301.0px;top:922.0px;color:#e6e6e6;font-size:15.5px;">0.500</div>
<div class="r" style="left:1519.5px;top:949.9px;width:288.0px;height:21.0px;background:#545454;border:1px solid #3c3c3c;border-radius:4px;overflow:hidden"></div>
<div class="t" style="left:1541.0px;top:951.4px;color:#e6e6e6;font-size:15.5px;"><span class="c" style="width:27.8px">清漆</span> | Clearcoat</div>
<div class="t" style="right:301.0px;top:951.4px;color:#e6e6e6;font-size:15.5px;">0.000</div>
<div class="r" style="left:1519.5px;top:978.7px;width:288.0px;height:21.0px;background:#545454;border:1px solid #3c3c3c;border-radius:4px;overflow:hidden"><div style="position:absolute;left:0;top:0;bottom:0;width:5.2px;background:#4772b3"></div></div>
<div class="t" style="left:1541.0px;top:980.2px;color:#e6e6e6;font-size:15.5px;"><span class="c" style="width:69.5px">清漆粗糙度</span> | Clearcoat Rough</div>
<div class="t" style="right:301.0px;top:980.2px;color:#e6e6e6;font-size:15.5px;">0.030</div>
<div class="r" style="left:1519.5px;top:1008.3px;width:288.0px;height:21.0px;background:#545454;border:1px solid #3c3c3c;border-radius:4px;overflow:hidden"></div>
<div class="t" style="left:1541.0px;top:1009.8px;color:#e6e6e6;font-size:15.5px;">IOR <span class="c" style="width:41.7px">折射率</span> | IOR</div>
<div class="t" style="right:301.0px;top:1009.8px;color:#e6e6e6;font-size:15.5px;">1.450</div>
<div class="r" style="left:1519.5px;top:1037.5px;width:288.0px;height:21.0px;background:#545454;border:1px solid #3c3c3c;border-radius:4px;overflow:hidden"></div>
<div class="t" style="left:1541.0px;top:1039.0px;color:#e6e6e6;font-size:15.5px;"><span class="c" style="width:27.8px">透射</span> | Transmission</div>
<div class="t" style="right:301.0px;top:1039.0px;color:#e6e6e6;font-size:15.5px;">0.000</div>
<div class="r" style="left:1519.5px;top:1066.5px;width:288.0px;height:21.0px;background:#545454;border:1px solid #3c3c3c;border-radius:4px;overflow:hidden"></div>
<div class="t" style="left:1541.0px;top:1068.0px;color:#e6e6e6;font-size:15.5px;"><span class="c" style="width:69.5px">透射粗糙度</span> | Transmission Ro</div>
<div class="t" style="right:301.0px;top:1068.0px;color:#e6e6e6;font-size:15.5px;">0.000</div>
<div class="t" style="left:1520.3px;top:1097.3px;color:#e6e6e6;font-size:15.5px;"><span class="c" style="width:41.7px">自发光</span>(...ission</div>
<div class="r" style="left:1643px;top:1095.8px;width:166px;height:23px;background:#000000;border-radius:4px;box-shadow:0 0 0 1px #3a3a3a"></div>
<div class="r" style="left:1519.5px;top:1124.6px;width:288.0px;height:21.0px;background:#545454;border:1px solid #3c3c3c;border-radius:4px;overflow:hidden"></div>
<div class="t" style="left:1541.0px;top:1126.1px;color:#e6e6e6;font-size:15.5px;"><span class="c" style="width:69.5px">自发光强度</span> | Emission Strengt</div>
<div class="t" style="right:301.0px;top:1126.1px;color:#e6e6e6;font-size:15.5px;">1.000</div>
<div class="r" style="left:1519.5px;top:1154.1px;width:288.0px;height:21.0px;background:#545454;border:1px solid #3c3c3c;border-radius:4px;overflow:hidden"><div style="position:absolute;left:0;top:0;bottom:0;width:288.0px;background:#4772b3"></div></div>
<div class="t" style="left:1541.0px;top:1155.6px;color:#e6e6e6;font-size:15.5px;">Alpha</div>
<div class="t" style="right:301.0px;top:1155.6px;color:#e6e6e6;font-size:15.5px;">1.000</div>
<div class="t" style="left:1520.3px;top:1184.8px;color:#e6e6e6;font-size:15.5px;"><span class="c" style="width:27.8px">法向</span> | Normal</div>
<div class="t" style="left:1520.3px;top:1214.3px;color:#e6e6e6;font-size:15.5px;"><span class="c" style="width:55.6px">清漆法线</span> | Clearcoat Normal</div>
<div class="t" style="left:1520.3px;top:1243.1px;color:#e6e6e6;font-size:15.5px;"><span class="c" style="width:27.8px">切向</span>(<span class="c" style="width:27.8px">正切</span>) | Tangent</div>
<div class="n" style="left:1892.0px;top:394.0px;width:185.0px;height:162.0px"></div>
<div class="r" style="left:1892.0px;top:394.0px;width:185.0px;height:26.5px;background:#3c1d26;border-radius:4px 4px 0 0"></div>
<svg class="r" style="left:1906.5px;top:402.2px" width="14" height="10"><path d="M1 1.8 L6.5 7.8 L12 1.8" fill="none" stroke="#e6e6e6" stroke-width="1.5"/></svg>
<div class="t" style="left:1926.0px;top:397.2px;color:#e6e6e6;font-size:15.5px;"><span class="c" style="width:55.6px">材质输出</span> | Material ...</div>
<div class="r" style="left:1906.0px;top:428.0px;width:155.0px;height:24.0px;background:#282828;border:1px solid #414141;border-radius:4px;box-shadow:0 1px 1px rgba(0,0,0,.25)"></div>
<div class="t" style="left:1916.0px;top:430.2px;color:#e6e6e6;font-size:15.5px;"><span class="c" style="width:27.8px">全部</span> | All</div>
<svg class="r" style="left:2049.0px;top:437.5px" width="10" height="8"><path d="M1.5 2 L5 5.5 L8.5 2" fill="none" stroke="#e6e6e6" stroke-width="1.4"/></svg>
<div class="t" style="left:1907.4px;top:463.7px;color:#e6e6e6;font-size:15.5px;"><span class="c" style="width:13.9px">表</span>(<span class="c" style="width:13.9px">曲</span>)<span class="c" style="width:13.9px">面</span> | Surface</div>
<div class="t" style="left:1907.4px;top:493.4px;color:#e6e6e6;font-size:15.5px;"><span class="c" style="width:27.8px">体积</span> | Volume</div>
<div class="t" style="left:1907.4px;top:523.5px;color:#e6e6e6;font-size:15.5px;"><span class="c" style="width:27.8px">置换</span> | Displacement</div>
<div class="n" style="left:1638.0px;top:1329.0px;width:185.0px;height:226.0px"></div>
<div class="r" style="left:1638.0px;top:1329.0px;width:185.0px;height:26.0px;background:#3c3c83;border-radius:4px 4px 0 0"></div>
<svg class="r" style="left:1652.5px;top:1337.0px" width="14" height="10"><path d="M1 1.8 L6.5 7.8 L12 1.8" fill="none" stroke="#e6e6e6" stroke-width="1.5"/></svg>
<div class="t" style="left:1672.7px;top:1332.0px;color:#e6e6e6;font-size:15.5px;"><span class="c" style="width:27.8px">置换</span> | Displacement</div>
<div class="t" style="right:284.5px;top:1365.0px;color:#e6e6e6;font-size:15.5px;"><span class="c" style="width:27.8px">置换</span> | Displacement</div>
<div class="r" style="left:1652.0px;top:1402.0px;width:154.5px;height:24.0px;background:#282828;border:1px solid #414141;border-radius:4px;box-shadow:0 1px 1px rgba(0,0,0,.25)"></div>
<div class="t" style="left:1662.0px;top:1404.2px;color:#e6e6e6;font-size:15.5px;"><span class="c" style="width:55.6px">物体空间</span> | Object...</div>
<svg class="r" style="left:1794.5px;top:1411.5px" width="10" height="8"><path d="M1.5 2 L5 5.5 L8.5 2" fill="none" stroke="#e6e6e6" stroke-width="1.4"/></svg>
<div class="t" style="left:1653.5px;top:1438.3px;color:#e6e6e6;font-size:15.5px;"><span class="c" style="width:27.8px">高度</span> | Height</div>
<div class="r" style="left:1652.0px;top:1465.5px;width:154.5px;height:22.0px;background:#545454;border:1px solid #3c3c3c;border-radius:4px;overflow:hidden"></div>
<div class="t" style="left:1673.5px;top:1467.5px;color:#e6e6e6;font-size:15.5px;"><span class="c" style="width:41.7px">中间值</span> | Mi</div>
<div class="t" style="right:302.5px;top:1467.5px;color:#e6e6e6;font-size:15.5px;">0.500</div>
<div class="r" style="left:1652.0px;top:1494.5px;width:154.5px;height:22.0px;background:#545454;border:1px solid #3c3c3c;border-radius:4px;overflow:hidden"></div>
<div class="t" style="left:1673.5px;top:1496.5px;color:#e6e6e6;font-size:15.5px;"><span class="c" style="width:27.8px">缩放</span> | Scal</div>
<div class="t" style="right:302.5px;top:1496.5px;color:#e6e6e6;font-size:15.5px;">1.000</div>
<div class="t" style="left:1653.5px;top:1526.0px;color:#e6e6e6;font-size:15.5px;"><span class="c" style="width:27.8px">法向</span> | Normal</div>
<div class="so" style="left:234.7px;top:449.7px;background:#6363c7"></div>
<div class="so" style="left:234.7px;top:479.7px;background:#6363c7"></div>
<div class="so" style="left:234.7px;top:509.7px;background:#6363c7"></div>
<div class="so" style="left:234.7px;top:539.7px;background:#6363c7"></div>
<div class="so" style="left:234.7px;top:569.6px;background:#6363c7"></div>
<div class="so" style="left:234.7px;top:599.5px;background:#6363c7"></div>
<div class="so" style="left:234.7px;top:629.5px;background:#6363c7"></div>
<div class="so" style="left:501.7px;top:449.9px;background:#6363c7"></div>
<div class="so" style="left:315.7px;top:523.5px;background:#6363c7"></div>
<div class="so" style="left:315.7px;top:553.3px;background:#6363c7"></div>
<div class="so" style="left:315.7px;top:664.7px;background:#6363c7"></div>
<div class="so" style="left:315.7px;top:775.7px;background:#6363c7"></div>
<div class="so" style="left:1082.7px;top:166.2px;background:#c7c729"></div>
<div class="so" style="left:1082.7px;top:196.2px;background:#a1a1a1"></div>
<div class="so" style="left:762.7px;top:470.2px;background:#6363c7"></div>
<div class="so" style="left:1082.7px;top:540.2px;background:#c7c729"></div>
<div class="so" style="left:1082.7px;top:570.2px;background:#a1a1a1"></div>
<div class="so" style="left:762.7px;top:844.2px;background:#6363c7"></div>
<div class="so" style="left:1082.7px;top:914.2px;background:#c7c729"></div>
<div class="so" style="left:1082.7px;top:944.2px;background:#a1a1a1"></div>
<div class="so" style="left:762.7px;top:1218.2px;background:#6363c7"></div>
<div class="so" style="left:1082.7px;top:1288.2px;background:#c7c729"></div>
<div class="so" style="left:1082.7px;top:1318.2px;background:#a1a1a1"></div>
<div class="so" style="left:762.7px;top:1592.2px;background:#6363c7"></div>
<div class="so" style="left:1363.2px;top:914.6px;background:#6363c7"></div>
<div class="so" style="left:1163.2px;top:1021.4px;background:#a1a1a1"></div>
<div class="so" style="left:1163.2px;top:1050.7px;background:#c7c729"></div>
<div class="so" style="left:1817.2px;top:433.2px;background:#63c763"></div>
<div class="so" style="left:1497.7px;top:540.2px;background:#c7c729"></div>
<div class="so" style="left:1497.7px;top:570.2px;background:#a1a1a1"></div>
<div class="so" style="left:1497.7px;top:600.2px;background:#6363c7"></div>
<div class="so" style="left:1497.7px;top:629.7px;background:#c7c729"></div>
<div class="so" style="left:1497.7px;top:659.7px;background:#a1a1a1"></div>
<div class="so" style="left:1497.7px;top:689.7px;background:#a1a1a1"></div>
<div class="so" style="left:1497.7px;top:719.9px;background:#a1a1a1"></div>
<div class="so" style="left:1497.7px;top:749.2px;background:#a1a1a1"></div>
<div class="so" style="left:1497.7px;top:779.4px;background:#a1a1a1"></div>
<div class="so" style="left:1497.7px;top:808.7px;background:#a1a1a1"></div>
<div class="so" style="left:1497.7px;top:837.6px;background:#a1a1a1"></div>
<div class="so" style="left:1497.7px;top:866.6px;background:#a1a1a1"></div>
<div class="so" style="left:1497.7px;top:895.9px;background:#a1a1a1"></div>
<div class="so" style="left:1497.7px;top:925.2px;background:#a1a1a1"></div>
<div class="so" style="left:1497.7px;top:954.6px;background:#a1a1a1"></div>
<div class="so" style="left:1497.7px;top:983.4px;background:#a1a1a1"></div>
<div class="so" style="left:1497.7px;top:1013.0px;background:#a1a1a1"></div>
<div class="so" style="left:1497.7px;top:1042.2px;background:#a1a1a1"></div>
<div class="so" style="left:1497.7px;top:1071.2px;background:#a1a1a1"></div>
<div class="so" style="left:1497.7px;top:1100.5px;background:#c7c729"></div>
<div class="so" style="left:1497.7px;top:1129.3px;background:#a1a1a1"></div>
<div class="so" style="left:1497.7px;top:1158.8px;background:#a1a1a1"></div>
<div class="so" style="left:1497.7px;top:1188.0px;background:#6363c7"></div>
<div class="so" style="left:1497.7px;top:1217.5px;background:#6363c7"></div>
<div class="so" style="left:1497.7px;top:1246.3px;background:#6363c7"></div>
<div class="so" style="left:1884.2px;top:466.9px;background:#63c763"></div>
<div class="so" style="left:1884.2px;top:496.6px;background:#63c763"></div>
<div class="so" style="left:1884.2px;top:526.7px;background:#6363c7"></div>
<div class="so" style="left:1817.2px;top:1368.2px;background:#6363c7"></div>
<div class="so" style="left:1630.2px;top:1441.5px;background:#a1a1a1"></div>
<div class="so" style="left:1630.2px;top:1470.7px;background:#a1a1a1"></div>
<div class="so" style="left:1630.2px;top:1499.6px;background:#a1a1a1"></div>
<div class="so" style="left:1630.2px;top:1529.2px;background:#6363c7"></div>
<div class="so" style="left:696.5px;top:862px;width:12px;height:12px;background:#6363c7"></div>
</div></body></html>
